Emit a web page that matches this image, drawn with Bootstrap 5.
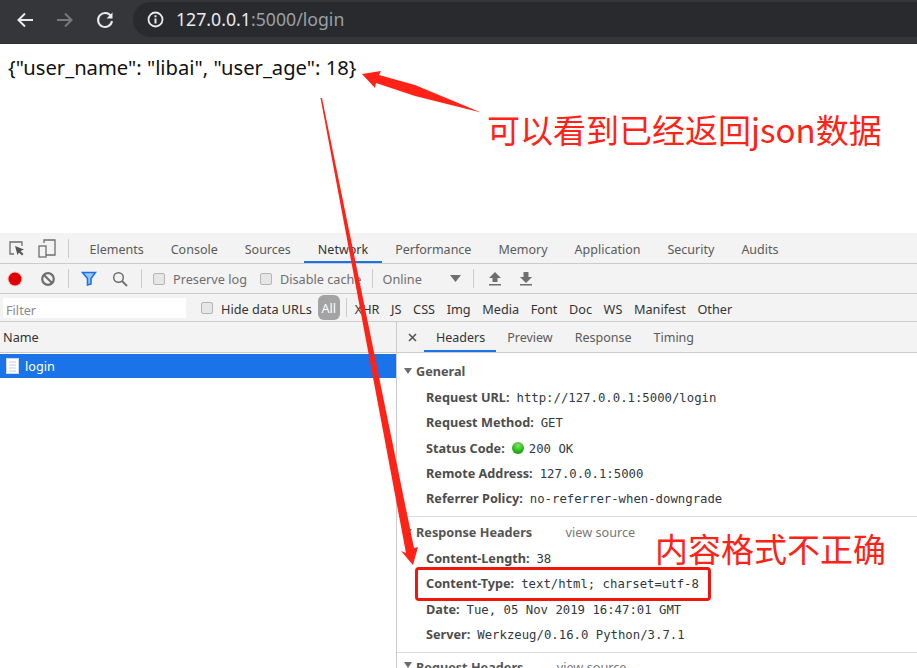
<!DOCTYPE html>
<html lang="zh-CN">
<head>
<meta charset="utf-8">
<title>login</title>
<link href="https://cdn.jsdelivr.net/npm/bootstrap@5.3.0/dist/css/bootstrap.min.css" rel="stylesheet">
<style>
html,body{height:668px;overflow:hidden;background:#fff}
body{font-family:"Noto Sans","Noto Sans CJK SC",sans-serif;color:#333;position:relative;width:917px}
.addr-bar{height:44px;background:#35363a;box-shadow:inset 0 -1px 0 #2b2c2f;padding:2px 0 0 8px}
.addr-btn{width:33px;height:33px;margin:1px 7px 0 0}
.addr-pill{flex:1;height:35px;margin-left:5px;background:#292a2d;border-radius:18px 0 0 18px;padding-left:14px;font-size:17.700px;color:#9aa0a6;gap:12px}
.addr-pill b{font-weight:400;color:#e8eaed}
.page-json{height:189px;padding:10px 8px;font-size:20.200px;color:#111;line-height:26px}
.dt{font-size:12.700px;height:435px;background:#fff}
.dt-row{background:#f3f3f3;border-bottom:1px solid #ccc}
.dt-tabs{height:31px;padding-left:8px;color:#5a5a5a;font-size:12.500px}
.dt-tools{height:30px;padding-left:7px;color:#6e6e6e}
.dt-tools .lbl{margin-top:3px}
.dt-filters{height:28px;color:#333}
.dt-filters .lbl{margin-top:4px}
.vsep{width:1px;height:19px;background:#ccc;flex:none}
.tab-item{height:30px;line-height:34px;padding:0 13.500px;white-space:nowrap}
.tab-item.on{color:#333;box-shadow:inset 0 -2px 0 #1a73e8}
.fake-check{width:12px;height:12px;border:1px solid #b5b5b5;border-radius:2px;background:#e6e6e6;flex:none}
.filter-box{width:183px;height:20px;background:#fff;margin-left:3px;padding-left:3px;color:#8a8a8a;line-height:24px;flex:none}
.all-pill{background:#a3a3a3;color:#fff;border-radius:6px;width:22px;height:25px;line-height:27px;text-align:center;margin-left:6px;flex:none}
.type-list{gap:11.600px;margin-left:8px;white-space:nowrap}
.sp6{margin-left:6px}.sp7{margin-left:7px}.sp8{margin-left:8px}.sp10{margin-left:10px}.sp11{margin-left:11px}.sp12{margin-left:12px}.sp13{margin-left:13px}.sp14{margin-left:14px}.sp15{margin-left:15px}.sp17{margin-left:17px}.sp28{margin-left:28px}
.panes{height:347px}
.left-pane{width:397px;flex:none;border-right:1px solid #ccc}
.name-head{height:31px;line-height:30px;padding-left:3px;background:#f3f3f3;border-bottom:1px solid #ccc}
.req-row{height:24px;margin-top:1px;background:#1a73e8;color:#fff;padding-left:6px;line-height:24px}
.right-pane{flex:1;min-width:0}
.sub-tabs{height:31px;background:#f3f3f3;border-bottom:1px solid #ccc;padding-left:11px;color:#5a5a5a;font-size:12.500px}
.sub-tab{height:30px;line-height:32px;padding:0 11px}
.sub-tab.on{color:#333;box-shadow:inset 0 -2px 0 #1a73e8;padding:0 11px 0 12px;margin-left:7px}
.sec-head{font-weight:700;color:#555;padding-left:19px;position:relative;height:25px;line-height:25px;font-size:12.700px;margin-bottom:1px}
.sec-head::before{content:"";position:absolute;left:7px;top:9px;border-style:solid;border-width:6px 4px 0 4px;border-color:#6e6e6e transparent transparent}
.hdr-line{height:25.300px;line-height:25px;padding-left:29px;white-space:nowrap;font-size:12.700px}
.hdr-line b{color:#4d4d4d;font-weight:700;margin-right:7px}
.hdr-line span{font-family:"DejaVu Sans Mono",monospace;font-size:12.300px;color:#303942}
.status-dot{display:inline-block;width:12px;height:12px;border-radius:50%;background:radial-gradient(circle at 50% 30%,#8de06a,#1eb512 60%,#0c8c08);margin-right:5px;vertical-align:-1px}
.sec-block{border-bottom:1px solid #ddd}
.sec-first{height:164px;padding-top:6px}
.sec-second{height:136px;padding-top:3px}
.sec-third{padding-top:2px}
.view-src{color:#777;font-weight:400;margin-left:30px}
.note{position:absolute;color:#ff2216;white-space:nowrap;line-height:1;font-family:"Noto Sans CJK SC",sans-serif;font-size:33px}
.note-a{left:487px;top:113px}
.note-b{left:655px;top:532px}
.mark-box{position:absolute;left:415px;top:567px;width:296px;height:34px;border:3px solid #f0160c;border-radius:4px}
.ink{position:absolute;left:0;top:0;pointer-events:none}
</style>
</head>
<body>
<div class="addr-bar d-flex align-items-start">
  <div class="addr-btn d-flex align-items-center justify-content-center"><svg width="20" height="20" viewBox="0 0 20 20"><path d="M18 10H4M10 3.500 3.500 10l6.500 6.500" fill="none" stroke="#e8eaed" stroke-width="2"/></svg></div>
  <div class="addr-btn d-flex align-items-center justify-content-center"><svg width="20" height="20" viewBox="0 0 20 20"><path d="M2 10h14M10 3.500l6.500 6.500-6.500 6.500" fill="none" stroke="#77797c" stroke-width="2"/></svg></div>
  <div class="addr-btn d-flex align-items-center justify-content-center"><svg width="20" height="20" viewBox="0 0 20 20"><path d="M16 6.300A7 7 0 1 0 17 11" fill="none" stroke="#e8eaed" stroke-width="2"/><path d="M17.500 2.500v6h-6z" fill="#e8eaed"/></svg></div>
  <div class="addr-pill d-flex align-items-center">
    <svg width="17" height="17" viewBox="0 0 17 17"><circle cx="8.500" cy="8.500" r="7" fill="none" stroke="#e8eaed" stroke-width="1.800"/><path d="M7.500 7.500h2v5h-2zM7.500 4.300h2v2h-2z" fill="#e8eaed"/></svg>
    <div><b>127.0.0.1</b>:5000/login</div>
  </div>
</div>
<div class="page-json">{"user_name": "libai", "user_age": 18}</div>
<div class="dt">
  <div class="dt-row dt-tabs d-flex align-items-center">
    <svg width="17" height="17" viewBox="0 0 17 17"><path d="M6 14H2V2h12v4" fill="none" stroke="#6e6e6e" stroke-width="1.300"/><path d="M7 6l9 3.500-3.500 1.500 3 3-1.500 1.500-3-3L9.500 15z" fill="#555"/></svg>
    <svg width="18" height="19" viewBox="0 0 18 19" class="sp13"><path d="M6 4V1h11v15H8" fill="none" stroke="#6e6e6e" stroke-width="1.300"/><rect x="1" y="7" width="7" height="11" fill="none" stroke="#6e6e6e" stroke-width="1.300"/></svg>
    <div class="vsep sp12"></div>
    <div class="sp7"></div>
    <div class="tab-item">Elements</div><div class="tab-item">Console</div><div class="tab-item">Sources</div><div class="tab-item on">Network</div><div class="tab-item">Performance</div><div class="tab-item">Memory</div><div class="tab-item">Application</div><div class="tab-item">Security</div><div class="tab-item">Audits</div>
  </div>
  <div class="dt-row dt-tools d-flex align-items-center">
    <svg width="16" height="16" viewBox="0 0 16 16"><circle cx="8" cy="8" r="7.500" fill="#f5c6c6"/><circle cx="8" cy="8" r="6.500" fill="#e00000"/></svg>
    <svg width="16" height="16" viewBox="0 0 16 16" class="sp17"><circle cx="8" cy="8" r="5.800" fill="none" stroke="#6e6e6e" stroke-width="2.200"/><path d="M4 4l8 8" stroke="#6e6e6e" stroke-width="2.200"/></svg>
    <div class="vsep sp12"></div>
    <svg width="16" height="15" viewBox="0 0 16 15" class="sp12"><path d="M1.500 1.500h13L10 7.500V13L6.500 14V7.500z" fill="#9fc3f3" stroke="#1a73e8" stroke-width="1.600"/></svg>
    <svg width="16" height="16" viewBox="0 0 16 16" class="sp15"><circle cx="6.500" cy="6.500" r="4.800" fill="none" stroke="#6e6e6e" stroke-width="1.500"/><path d="M10 10l5 5" stroke="#6e6e6e" stroke-width="1.800"/></svg>
    <div class="vsep sp13"></div>
    <div class="fake-check sp11"></div><div class="sp8 lbl">Preserve log</div>
    <div class="fake-check sp13"></div><div class="sp8 lbl">Disable cache</div>
    <div class="vsep sp10"></div>
    <div class="sp10 lbl">Online</div>
    <svg width="11" height="7" viewBox="0 0 11 7" class="sp28"><path d="M0 0h11L5.500 7z" fill="#6e6e6e"/></svg>
    <div class="vsep sp12"></div>
    <svg width="14" height="15" viewBox="0 0 14 15" class="sp14"><path d="M7 1l6 6H9.500v4h-5V7H1zM1 13h12v1.500H1z" fill="#6e6e6e"/></svg>
    <svg width="14" height="15" viewBox="0 0 14 15" class="sp17"><path d="M4.500 1h5v5H13l-6 6-6-6h3.500zM1 13h12v1.500H1z" fill="#6e6e6e"/></svg>
  </div>
  <div class="dt-row dt-filters d-flex align-items-center">
    <div class="filter-box">Filter</div>
    <div class="fake-check sp15"></div><div class="sp8 lbl">Hide data URLs</div>
    <div class="all-pill">All</div>
    <div class="vsep sp6"></div>
    <div class="d-flex type-list lbl"><span>XHR</span><span>JS</span><span>CSS</span><span>Img</span><span>Media</span><span>Font</span><span>Doc</span><span>WS</span><span>Manifest</span><span>Other</span></div>
  </div>
  <div class="panes d-flex">
    <div class="left-pane">
      <div class="name-head">Name</div>
      <div class="req-row d-flex align-items-center">
        <svg width="13" height="16" viewBox="0 0 13 16"><rect x=".5" y=".5" width="12" height="15" fill="#fff" stroke="#cfd8e6"/><path d="M3 4h7M3 7h7M3 10h7M3 13h7" stroke="#c4cedd"/></svg>
        <span class="sp6">login</span>
      </div>
    </div>
    <div class="right-pane">
      <div class="sub-tabs d-flex align-items-center">
        <svg width="9" height="9" viewBox="0 0 9 9"><path d="M1 1l7 7M8 1 1 8" stroke="#555" stroke-width="1.600"/></svg>
        <div class="sub-tab on">Headers</div><div class="sub-tab">Preview</div><div class="sub-tab">Response</div><div class="sub-tab">Timing</div>
      </div>
      <div class="sec-block sec-first">
        <div class="sec-head">General</div>
        <div class="hdr-line"><b>Request URL:</b><span>http://127.0.0.1:5000/login</span></div>
        <div class="hdr-line"><b>Request Method:</b><span>GET</span></div>
        <div class="hdr-line"><b>Status Code:</b><i class="status-dot"></i><span>200 OK</span></div>
        <div class="hdr-line"><b>Remote Address:</b><span>127.0.0.1:5000</span></div>
        <div class="hdr-line"><b>Referrer Policy:</b><span>no-referrer-when-downgrade</span></div>
      </div>
      <div class="sec-block sec-second">
        <div class="sec-head">Response Headers <span class="view-src">view source</span></div>
        <div class="hdr-line"><b>Content-Length:</b><span>38</span></div>
        <div class="hdr-line"><b>Content-Type:</b><span>text/html; charset=utf-8</span></div>
        <div class="hdr-line"><b>Date:</b><span>Tue, 05 Nov 2019 16:47:01 GMT</span></div>
        <div class="hdr-line"><b>Server:</b><span>Werkzeug/0.16.0 Python/3.7.1</span></div>
      </div>
      <div class="sec-head sec-third">Request Headers <span class="view-src">view source</span></div>
    </div>
  </div>
</div>
<div class="mark-box"></div>
<svg class="ink" width="917" height="668" viewBox="0 0 917 668">
  <path d="M362 74 381 71 379 75 415 85 481 112.500 415 96 376 83 375 88z" fill="#ff2216"/>
  <path d="M320.500 98 322 98 414 548 418 547 413 565 401 551 406 553z" fill="#ff2216"/>
</svg>
<div class="note note-a">可以看到已经返回json数据</div>
<div class="note note-b">内容格式不正确</div>
<script src="https://cdn.jsdelivr.net/npm/bootstrap@5.3.0/dist/js/bootstrap.bundle.min.js"></script>
</body>
</html>
